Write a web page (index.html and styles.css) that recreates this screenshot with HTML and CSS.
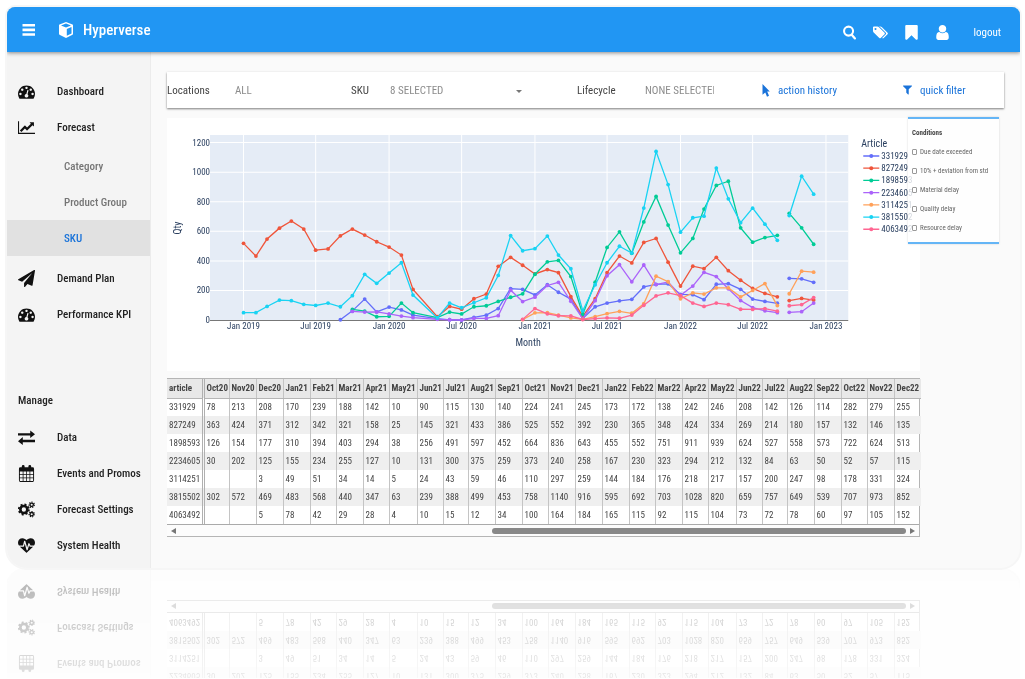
FILE: index.html
```html
<!DOCTYPE html>
<html lang="en">
<head>
<meta charset="utf-8">
<title>Hyperverse</title>
<link rel="stylesheet" href="styles.css">
</head>
<body>
<svg class="sprite" aria-hidden="true">
  <symbol id="i-dash" viewBox="0 0 1792 1792"><path d="M384 1152q0-53-37.500-90.500t-90.500-37.500-90.500 37.500-37.500 90.500 37.500 90.500 90.500 37.500 90.500-37.500 37.500-90.500zm192-448q0-53-37.500-90.500t-90.500-37.500-90.500 37.500-37.500 90.500 37.500 90.500 90.500 37.500 90.500-37.500 37.500-90.500zm428 481l101-382q6-26-7.500-48.500t-38.500-29.500-48 6.500-30 39.500l-101 382q-60 5-107 43.500t-63 98.500q-20 77 20 146t117 89 146-20 89-117q16-60-6-117t-72-91zm660-33q0-53-37.500-90.500t-90.500-37.500-90.500 37.500-37.500 90.500 37.500 90.500 90.500 37.500 90.500-37.500 37.500-90.500zm-640-640q0-53-37.500-90.500t-90.500-37.500-90.500 37.500-37.500 90.500 37.500 90.500 90.500 37.500 90.500-37.500 37.500-90.500zm448 192q0-53-37.500-90.500t-90.500-37.500-90.500 37.500-37.500 90.500 37.500 90.500 90.500 37.500 90.500-37.500 37.500-90.500zm320 448q0 261-141 483-19 29-54 29h-1402q-35 0-54-29-141-221-141-483 0-182 71-348t191-286 286-191 348-71 348 71 286 191 191 286 71 348z"/></symbol>
  <symbol id="i-line" viewBox="0 0 2048 1792"><path d="M2048 1536v128h-2048v-1536h128v1408h1920zm-128-1248v435q0 21-19.500 29.500t-35.500-7.500l-121-121-633 633q-10 10-23 10t-23-10l-233-233-416 416-192-192 585-585q10-10 23-10t23 10l233 233 464-464-121-121q-16-16-7.500-35.500t29.500-19.500h435q14 0 23 9t9 23z"/></symbol>
  <symbol id="i-plane" viewBox="0 0 1792 1792"><path d="M1764 11q33 24 27 64l-256 1536q-5 29-32 45-14 8-31 8-11 0-24-5l-453-185-242 295q-18 23-49 23-13 0-22-4-19-7-30.500-23.500t-11.500-36.500v-349l864-1059-1069 925-395-162q-37-14-40-55-2-40 32-59l1664-960q15-9 32-9 20 0 36 11z"/></symbol>
  <symbol id="i-swap" viewBox="0 0 16 16"><path d="M0 4h11.500V1.500L16 5l-4.500 3.500V6H0zM16 10H4.500V7.500L0 11.500 4.500 15v-2.500H16z"/></symbol>
  <symbol id="i-cal" viewBox="0 0 16 18"><path fill-rule="evenodd" d="M1.500 2.500H3V1.500a1.500 1.500 0 0 1 3 0v1h4v-1a1.500 1.500 0 0 1 3 0v1h1.500A1.500 1.500 0 0 1 16 4v12.500a1.500 1.500 0 0 1-1.500 1.500h-13A1.500 1.500 0 0 1 0 16.500V4a1.500 1.500 0 0 1 1.500-1.500zM1 7v2.800h3V7zm3.800 0v2.800h2.800V7zm3.600 0v2.800h2.800V7zM12 7v2.800h3V7zM1 10.600v2.600h3v-2.600zm3.800 0v2.600h2.800v-2.600zm3.600 0v2.600h2.800v-2.600zm3.600 0v2.600h3v-2.600zM1 14v3h3v-3zm3.800 0v3h2.800v-3zm3.600 0v3h2.800v-3zm3.600 0v3h3v-3z"/></symbol>
  <symbol id="i-cogs" viewBox="0 0 18 18"><g fill="none" stroke="currentColor"><circle cx="6.200" cy="9" r="3.700" stroke-width="2.800"/><circle cx="6.200" cy="9" r="5.400" stroke-width="1.800" stroke-dasharray="2.120 2.120"/><circle cx="14.500" cy="4" r="1.800" stroke-width="1.400"/><circle cx="14.500" cy="4" r="2.800" stroke-width="1.200" stroke-dasharray="1.260 1.260"/><circle cx="14.500" cy="14" r="1.800" stroke-width="1.400"/><circle cx="14.500" cy="14" r="2.800" stroke-width="1.200" stroke-dasharray="1.260 1.260"/></g></symbol>
  <symbol id="i-heart" viewBox="0 0 1792 1792"><path d="M1280 1024h305q-5 6-10 10.500t-9 7.500l-3 4-623 600q-18 18-44 18t-44-18l-624-602q-5-2-21-20h369q22 0 39.500-13.500t22.500-34.500l70-281 190 667q6 20 23 33t39 13q21 0 38-13t23-33l146-485 56 112q18 35 57 35zm512-428q0 145-103 300h-369l-111-221q-8-17-25.500-27t-36.500-8q-45 5-56 46l-129 430-196-686q-6-20-23.500-33t-39.500-13-39 13.500-22 34.500l-116 464h-423q-103-155-103-300 0-220 127-344t351-124q62 0 126.500 21.500t120 58 95.500 68.500 76 68q36-36 76-68t95.500-68.500 120-58 126.500-21.500q224 0 351 124t127 344z"/></symbol>
  <symbol id="i-bars" viewBox="0 0 14 12"><path d="M.5 0h12.500v2.600H.5zM.5 4.600h12.500v2.600H.5zM.5 9.200h12.500v2.600H.5z"/></symbol>
  <symbol id="i-cube" viewBox="0 0 14 16"><path fill-rule="evenodd" d="M7 0l6.500 2.600q.5.200.5.800v8.400q0 .6-.5.900L7.500 15.800q-.5.200-1 0L.5 12.700q-.5-.3-.5-.9V3.400q0-.6.500-.8zM7 1.500L2 3.500l5 2 5-2zm.8 5.400v6.900l4.700-2.400V5z"/></symbol>
  <symbol id="i-search" viewBox="0 0 14 16"><g fill="none" stroke="currentColor" stroke-linecap="round"><circle cx="6" cy="6.500" r="4.800" stroke-width="2.200"/><path d="M9.600 10.600l3.200 3.700" stroke-width="2.400"/></g></symbol>
  <symbol id="i-tags" viewBox="0 0 1920 1792"><path d="M448 448q0-53-37.500-90.500t-90.500-37.500-90.500 37.500-37.500 90.500 37.500 90.500 90.500 37.500 90.500-37.500 37.500-90.500zm1067 576q0 53-37 90l-491 492q-39 37-91 37-53 0-90-37l-715-716q-38-37-64.500-101t-26.500-117v-416q0-52 38-90t90-38h416q53 0 117 26.500t102 64.500l715 714q37 39 37 91zm384 0q0 53-37 90l-491 492q-39 37-91 37-36 0-59-14t-53-45l470-470q37-37 37-90 0-52-37-91l-715-714q-38-38-102-64.500t-117-26.500h224q53 0 117 26.500t102 64.500l715 714q37 39 37 91z"/></symbol>
  <symbol id="i-mark" viewBox="256 128 1280 1536"><path d="M1420 128q23 0 44 9 33 13 52.500 41t19.500 62v1289q0 34-19.500 62t-52.500 41q-19 8-44 8-48 0-83-32l-441-424-441 424q-36 33-83 33-23 0-44-9-33-13-52.500-41t-19.500-62v-1289q0-34 19.500-62t52.500-41q21-9 44-9h1048z"/></symbol>
  <symbol id="i-user" viewBox="256 128 1280 1536"><path d="M1536 1399q0 109-62.500 187t-150.500 78h-854q-88 0-150.500-78t-62.500-187q0-85 8.500-160.500t31.500-152 58.500-131 94-89 134.500-34.500q131 128 313 128t313-128q76 0 134.500 34.500t94 89 58.500 131 31.500 152 8.500 160.500zm-256-887q0 159-112.500 271.500t-271.500 112.500-271.500-112.500-112.500-271.500 112.500-271.500 271.500-112.500 271.500 112.500 112.500 271.500z"/></symbol>
  <symbol id="i-pointer" viewBox="0 0 8 13"><path d="M.5 0L7.800 7.400H5.200L7 11.800l-2 .9-1.700-4.300L.5 10.800z"/></symbol>
  <symbol id="i-filter" viewBox="192 256 1408 1408"><path d="M1595 295q17 41-14 70l-493 493v742q0 42-39 59-13 5-25 5-27 0-45-19l-256-256q-19-19-19-45v-486l-493-493q-31-29-14-70 17-39 59-39h1280q42 0 59 39z"/></symbol>
</svg>

<div class="app">
  <header class="topbar">
    <button class="icon-btn menu" aria-label="Menu"><svg class="ic-bars"><use href="#i-bars"/></svg></button>
    <a class="brand" href="#"><svg class="ic-cube"><use href="#i-cube"/></svg>Hyperverse</a>
    <div class="tools">
      <button class="icon-btn" aria-label="Search"><svg class="ic-tool"><use href="#i-search"/></svg></button>
      <button class="icon-btn" aria-label="Tags"><svg class="ic-tool"><use href="#i-tags"/></svg></button>
      <button class="icon-btn" aria-label="Bookmarks"><svg class="ic-tool"><use href="#i-mark"/></svg></button>
      <button class="icon-btn" aria-label="Account"><svg class="ic-tool"><use href="#i-user"/></svg></button>
      <a class="logout" href="#">logout</a>
    </div>
  </header>
  <div class="body">
    <aside class="sidebar">
      <nav>
        <a class="item" href="#"><svg><use href="#i-dash"/></svg>Dashboard</a>
        <a class="item" href="#"><svg><use href="#i-line"/></svg>Forecast</a>
        <div class="sub">
          <a href="#">Category</a>
          <a href="#">Product Group</a>
          <a class="active" href="#">SKU</a>
        </div>
        <a class="item" href="#"><svg><use href="#i-plane"/></svg>Demand Plan</a>
        <a class="item" href="#"><svg><use href="#i-dash"/></svg>Performance KPI</a>
      </nav>
      <nav class="manage">
        <h2>Manage</h2>
        <a class="item" href="#"><svg><use href="#i-swap"/></svg>Data</a>
        <a class="item" href="#"><svg><use href="#i-cal"/></svg>Events and Promos</a>
        <a class="item" href="#"><svg><use href="#i-cogs"/></svg>Forecast Settings</a>
        <a class="item" href="#"><svg><use href="#i-heart"/></svg>System Health</a>
      </nav>
    </aside>
    <main class="main">
      <form class="filters">
        <label for="loc">Locations</label>
        <div class="pick"><select id="loc"><option>ALL</option></select></div>
        <label for="sku">SKU</label>
        <div class="pick caret"><select id="sku"><option>8 SELECTED</option></select></div>
        <label for="life">Lifecycle</label>
        <div class="pick narrow"><select id="life"><option>NONE SELECTED</option></select></div>
        <a href="#"><svg class="ic-pointer"><use href="#i-pointer"/></svg>action history</a>
        <a href="#"><svg class="ic-filter"><use href="#i-filter"/></svg>quick filter</a>
      </form>
      <div class="report">
        <section class="chart-card"><svg id="chart" class="chart" viewBox="0 0 753 253" role="img" aria-label="Quantity by month"></svg></section>
        <fieldset class="conditions">
          <legend>Conditions</legend>
          <label><input type="checkbox">Due date exceeded</label>
          <label><input type="checkbox">10% + deviation from std</label>
          <label><input type="checkbox">Material delay</label>
          <label><input type="checkbox">Quality delay</label>
          <label><input type="checkbox">Resource delay</label>
        </fieldset>
        <section class="grid-card">
          <table id="grid"></table>
          <div class="scroll"><span class="arrow left"></span><span class="track"><span class="thumb"></span></span><span class="arrow right"></span></div>
        </section>
      </div>
    </main>
  </div>
</div>
<script src="app.js"></script>
</body>
</html>
```
FILE: styles.css
```css
:root {
  --ui: "Roboto Condensed", Roboto, sans-serif;
  --blue: #2196f3;
  --link: #1a73d9;
}
* { box-sizing: border-box; }
body {
  margin: 0;
  padding: 7px 5px 110px 7px;
  background: #fff;
  font-family: var(--ui);
  font-size: 11px;
  color: #222;
}
a { color: inherit; text-decoration: none; }
svg { display: block; fill: currentColor; }
.sprite { position: absolute; width: 0; height: 0; }

.app {
  border-radius: 8px 8px 20px 20px;
  overflow: hidden;
  background: #fafafa;
  box-shadow: 0 0 0 2px #f6f6f6;
  -webkit-box-reflect: below 1px linear-gradient(transparent 68%, rgba(0, 0, 0, 0.32));
}

.topbar {
  position: relative;
  display: flex;
  align-items: center;
  height: 45px;
  padding: 0 19px 0 15px;
  background: var(--blue);
  color: #fff;
  box-shadow: 0 1px 4px rgba(0, 0, 0, 0.45);
}
.icon-btn {
  display: flex;
  padding: 0;
  border: 0;
  background: none;
  color: inherit;
}
.ic-bars { width: 14px; height: 12px; }
.brand {
  display: flex;
  align-items: center;
  gap: 10px;
  margin-left: 23px;
  font-size: 15px;
  font-weight: 500;
}
.ic-cube { width: 14px; height: 16px; }
.tools {
  display: flex;
  align-items: center;
  gap: 16px;
  margin-left: auto;
  padding-top: 6px;
}
.ic-tool { width: 15px; height: 15px; }
.logout { margin-left: 7px; }

.body { display: flex; }
.sidebar {
  flex: none;
  width: 144px;
  padding: 21px 0 5px;
  background: #f4f4f4;
  border-right: 1px solid #ececec;
}
.item {
  display: flex;
  align-items: center;
  gap: 14px;
  height: 36px;
  padding-left: 11px;
  font-weight: 500;
  white-space: nowrap;
}
.item svg { flex: none; width: 17px; height: 17px; margin-right: 8px; color: #111; }
.sub { margin: 3px 0 4px; }
.sub a {
  display: flex;
  align-items: center;
  height: 36px;
  padding-left: 57px;
  font-weight: 500;
  color: #757575;
}
.sub .active { background: #e1e1e1; color: var(--link); }
.manage { margin-top: 51px; }
.manage h2 {
  margin: 0;
  padding-left: 11px;
  font-size: 11px;
  font-weight: 500;
  line-height: 36px;
}

.main { flex: 1; min-width: 0; padding: 20px 16px 0; }
.filters {
  display: grid;
  grid-template-columns:
    minmax(0, 68fr) minmax(0, 116fr) minmax(0, 39fr) minmax(0, 187fr)
    minmax(0, 68fr) minmax(0, 117fr) minmax(0, 141fr) minmax(0, 101fr);
  align-items: center;
  height: 36px;
  background: #fff;
  box-shadow: 0 1px 2px rgba(0, 0, 0, 0.5);
  color: #444;
  font-size: 11px;
  white-space: nowrap;
}
.filters a { display: flex; align-items: center; gap: 8px; color: var(--link); }
.ic-pointer { width: 8px; height: 13px; }
.ic-filter { width: 9px; height: 10px; }
.pick { position: relative; width: 72%; }
.pick select {
  appearance: none;
  width: 100%;
  padding: 0;
  border: 0;
  background: none;
  font: inherit;
  color: #8c8c8c;
}
.narrow { width: 59%; }
.caret::after {
  content: "";
  position: absolute;
  right: 3px;
  top: 6px;
  border: 3px solid transparent;
  border-top-color: #777;
}

.report { position: relative; margin-top: 10px; }
.chart-card { width: 90%; background: #fff; }
.chart { width: 100%; height: auto; font-size: 9px; fill: #2a3f5f; }
.chart .plot { fill: #e5ecf6; }
.chart .grid { stroke: #fff; }
.chart .axis { stroke: #777; }
.chart .series { fill: none; stroke-width: 1.3; }
.chart .label { font-size: 10px; }

.conditions {
  position: absolute;
  top: -1px;
  right: 5px;
  display: flex;
  flex-direction: column;
  width: 91px;
  margin: 0;
  padding: 6px 4px 5px;
  border: solid #64b5f6;
  border-width: 2px 0;
  background: rgba(255, 255, 255, 0.8);
  box-shadow: 0 0 2px rgba(0, 0, 0, 0.15);
  font-size: 7px;
  color: #666;
}
.conditions legend { float: left; padding: 0; font-weight: 700; line-height: 17px; color: #444; }
.conditions label { display: flex; align-items: center; gap: 3px; height: 19px; white-space: nowrap; }
.conditions input {
  appearance: none;
  flex: none;
  width: 5px;
  height: 6px;
  margin: 0;
  border: 1px solid #999;
  border-radius: 1px;
  background: #fff;
}

.grid-card { width: 90%; margin-top: 7px; border: solid #b5b5b5; border-width: 1px 1px 1px 0; background: #fff; }
.grid-card table { width: 100%; table-layout: fixed; border-collapse: collapse; font-size: 9px; color: #444; }
.grid-card th, .grid-card td {
  height: 18px;
  padding: 0 0 0 2px;
  border-right: 1px solid #c4c4c4;
  text-align: left;
  white-space: nowrap;
}
.grid-card th { height: 19px; background: #e8e8e8; border-bottom: 1px solid #b5b5b5; font-weight: 700; }
.grid-card tr > :first-child { border-right: 3px double #b0b0b0; font-weight: 400; }
.grid-card thead tr > :first-child { font-weight: 700; }
.grid-card tbody th { height: 18px; background: none; border-bottom: 0; }
.grid-card tr > :last-child { border-right: 0; }
.grid-card tbody tr:nth-child(even) { background: #efefef; }
.scroll {
  display: flex;
  align-items: center;
  height: 12px;
  padding: 0 4px;
  border-top: 1px solid #aaa;
  background: #fcfcfc;
}
.arrow { border: 3px solid transparent; }
.left { border-right: 5px solid #777; border-left: 0; }
.right { border-left: 5px solid #777; border-right: 0; }
.track { flex: 1; display: flex; justify-content: flex-end; padding: 0 4px; }
.thumb { width: 57%; height: 6px; border-radius: 3px; background: #888; }
```
FILE: app.js
```js
// Monthly quantities; history runs to Sep 2020, monthly covers Oct 2020 - Dec 2022.
const N = null;
const articles = [
  { id: '331929', color: '#636efa',
    history: [N,N,N,N,N,N,N,N,2,62,142,55,88,68,33,N,10,2,1,18,33],
    monthly: [78,213,208,170,239,188,142,10,90,115,130,140,224,241,245,173,172,138,242,246,208,142,126,114,282,279,255] },
  { id: '827249', color: '#ef553b',
    history: [519,433,548,622,670,616,473,481,570,616,575,530,494,440,207,N,22,92,74,144,176],
    monthly: [363,424,371,312,342,321,158,25,145,321,433,386,525,552,392,230,365,348,424,334,269,214,180,157,132,146,135] },
  { id: '1898593', color: '#00cc96',
    history: [N,N,N,N,N,N,N,N,N,72,60,22,25,115,50,N,16,54,41,90,97],
    monthly: [126,154,177,310,394,403,294,38,256,491,597,452,664,836,643,455,552,751,911,939,624,527,558,573,722,624,513] },
  { id: '2234605', color: '#ab63fa',
    history: [N,N,N,N,N,N,N,N,N,58,54,55,41,27,16,N,5,2,1,11,11],
    monthly: [30,202,125,155,234,255,127,10,131,300,375,259,373,240,258,167,230,323,294,212,132,84,63,50,52,57,115] },
  { id: '3114251', color: '#ffa15a',
    history: Array(21).fill(N),
    monthly: [N,N,3,49,51,34,14,5,24,43,59,46,110,297,259,144,184,176,218,217,157,200,247,98,178,331,324] },
  { id: '3815502', color: '#19d3f3',
    history: [50,50,92,135,131,106,99,115,90,165,309,248,318,388,169,N,14,115,83,117,151],
    monthly: [302,572,469,483,568,440,347,63,239,388,499,453,758,1140,916,595,692,703,1028,820,659,757,649,539,707,973,852] },
  { id: '4063492', color: '#ff6692',
    history: Array(21).fill(N),
    monthly: [N,N,5,78,42,29,28,4,10,15,12,34,100,164,184,165,115,92,115,104,73,72,78,60,97,105,152] }
];
const names = ['Jan','Feb','Mar','Apr','May','Jun','Jul','Aug','Sep','Oct','Nov','Dec'];
const widths = [27,26,27,26,28,26,25,27,27,26,27,27];

const x = m => Math.round((76.5 + 0.3985 * (Date.UTC(2019, m, 1) - Date.UTC(2019, 0, 1)) / 864e5) * 10) / 10;
const y = v => Math.round((202 - v * 0.1478) * 10) / 10;

let out = '<rect class="plot" x="43" y="17" width="638" height="185"/>';
for (let v = 0; v <= 1200; v += 200) {
  if (v) out += `<path class="grid" d="M43 ${y(v)}H681"/>`;
  out += `<text x="43" y="${y(v) + 3}" text-anchor="end">${v}</text>`;
}
for (let m = 0; m <= 48; m += 6) {
  out += `<path class="grid" d="M${x(m)} 17V202"/>`;
  out += `<text x="${x(m)}" y="211" text-anchor="middle">${names[m % 12]} ${2019 + Math.floor(m / 12)}</text>`;
}
out += '<path class="axis" d="M43 202.500H681"/>';
out += '<text class="label" x="361" y="228" text-anchor="middle">Month</text>';
out += '<text class="label" transform="translate(14 110) rotate(-90)" text-anchor="middle">Qty</text>';
out += '<text class="label" x="694" y="29">Article</text>';
articles.forEach((a, i) => {
  let d = '', dots = '', pen = 'M';
  a.history.concat(a.monthly).forEach((v, m) => {
    if (m === 45) pen = 'M';
    if (v === N) return;
    d += pen + x(m) + ' ' + y(v);
    pen = 'L';
    dots += `<circle cx="${x(m)}" cy="${y(v)}" r="1.900"/>`;
  });
  const ly = 38 + i * 12.2;
  out += `<path class="series" stroke="${a.color}" d="${d}"/><g fill="${a.color}">${dots}<circle cx="704" cy="${ly}" r="2"/></g>`;
  out += `<path class="series" stroke="${a.color}" d="M696 ${ly}h16"/><text x="714" y="${ly + 3}">${a.id}</text>`;
});
document.getElementById('chart').innerHTML = out;

let cols = '<col style="width:36px">', head = '<th scope="col">article</th>';
for (let m = 21; m < 48; m++) {
  cols += `<col style="width:${widths[m % 12]}px">`;
  head += `<th scope="col">${names[m % 12]}${19 + Math.floor(m / 12)}</th>`;
}
const rows = articles.map(a => `<tr><th scope="row">${a.id}</th>${a.monthly.map(v => `<td>${v === N ? '' : v}</td>`).join('')}</tr>`);
document.getElementById('grid').innerHTML = `<colgroup>${cols}</colgroup><thead><tr>${head}</tr></thead><tbody>${rows.join('')}</tbody>`;
```
